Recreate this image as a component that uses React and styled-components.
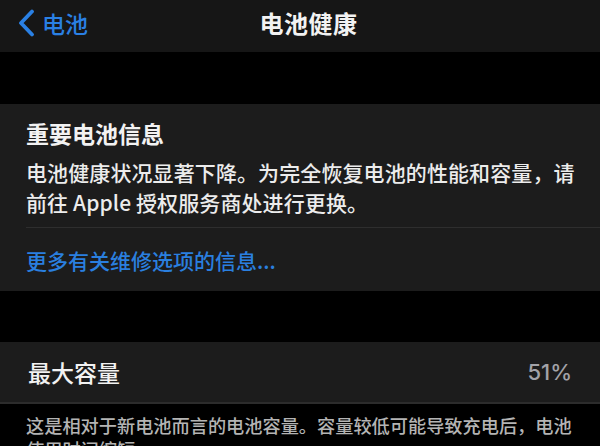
import React from "react";
import styled, { createGlobalStyle } from "styled-components";

const Global = createGlobalStyle`
  html, body { margin: 0; padding: 0; background: #000; }
  body {
    width: 600px;
    height: 446px;
    overflow: hidden;
    font-family: "Noto Sans CJK SC", "Noto Sans", "Liberation Sans", sans-serif;
    -webkit-font-smoothing: antialiased;
  }
`;

const Page = styled.div`
  width: 600px;
  display: flex;
  flex-direction: column;
  background: #000;
`;

const NavBar = styled.header`
  height: 52px;
  box-sizing: border-box;
  padding: 0 0 6px 17px;
  background: #161616;
  display: grid;
  grid-template-columns: 1fr auto 1fr;
  align-items: center;
`;

const BackButton = styled.div`
  display: flex;
  align-items: center;
  gap: 7px;
  color: #2a80e4;
  font-size: 23px;
  font-weight: 500;
  line-height: 30px;
`;

const NavTitle = styled.h1`
  margin: 0;
  color: #f2f2f2;
  font-size: 24px;
  font-weight: 700;
  line-height: 30px;
  letter-spacing: 0.5px;
`;

const Spacer = styled.div`
  height: ${(p) => p.$h}px;
  background: #000;
`;

const Card = styled.section`
  background: #1c1c1c;
  border-bottom: ${(p) => (p.$edge ? "2px solid #2c2c2c" : "none")};
`;

const InfoBlock = styled.div`
  padding: 14px 20px 10px 26px;
`;

const CardTitle = styled.h2`
  margin: 0 0 9px;
  color: #f2f2f2;
  font-size: 23px;
  font-weight: 700;
  line-height: 30px;
`;

const Body = styled.p`
  margin: 0;
  color: #ececec;
  font-size: 21px;
  font-weight: 500;
  line-height: 30px;
  letter-spacing: 0.1px;
`;

const Divider = styled.div`
  height: 1px;
  margin-left: 26px;
  background: #2e2e2e;
`;

const LinkRow = styled.div`
  height: 63px;
  padding-left: 26px;
  display: flex;
  align-items: center;
  color: #2a7fdf;
  font-size: 21px;
  font-weight: 500;
`;

const ValueRow = styled.div`
  height: 60px;
  padding: 0 28px 0 28px;
  display: flex;
  align-items: center;
  justify-content: space-between;
`;

const Label = styled.span`
  color: #f2f2f2;
  font-size: 23px;
  font-weight: 500;
`;

const Value = styled.span`
  color: #a3a3a8;
  font-family: "Inter", "Noto Sans", sans-serif;
  font-size: 22px;
  font-weight: 500;
`;

const Footer = styled.p`
  margin: 0;
  padding: 9px 18px 0 26px;
  color: #b4b4b4;
  font-size: 18.2px;
  font-weight: 500;
  line-height: 24px;
`;

const Chevron = () => (
  <svg width="18" height="28" viewBox="0 0 18 28" fill="none">
    <path
      d="M15 2.5 L4 14 L15 25.5"
      stroke="#2a80e4"
      strokeWidth="3.8"
      strokeLinecap="round"
      strokeLinejoin="round"
    />
  </svg>
);

export default function App() {
  return (
    <Page>
      <Global />
      <NavBar>
        <BackButton>
          <Chevron />
          <span>电池</span>
        </BackButton>
        <NavTitle>电池健康</NavTitle>
        <div />
      </NavBar>
      <Spacer $h={52} />
      <Card>
        <InfoBlock>
          <CardTitle>重要电池信息</CardTitle>
          <Body>
            电池健康状况显著下降。为完全恢复电池的性能和容量，请前往 Apple 授权服务商处进行更换。
          </Body>
        </InfoBlock>
        <Divider />
        <LinkRow>更多有关维修选项的信息...</LinkRow>
      </Card>
      <Spacer $h={51} />
      <Card $edge>
        <ValueRow>
          <Label>最大容量</Label>
          <Value>51%</Value>
        </ValueRow>
      </Card>
      <Footer>
        这是相对于新电池而言的电池容量。容量较低可能导致充电后，电池使用时间缩短。
      </Footer>
    </Page>
  );
}
